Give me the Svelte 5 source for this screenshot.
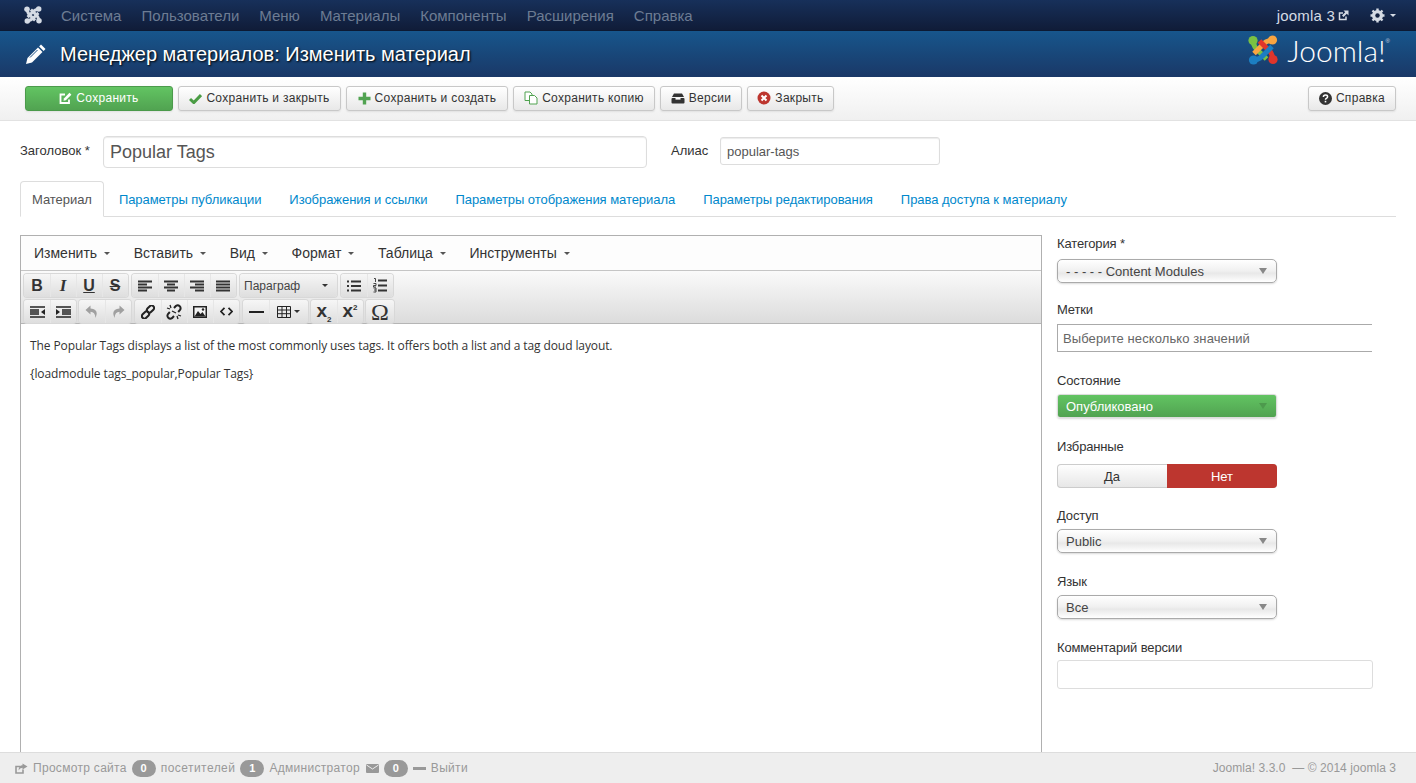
<script>
  const navItems = ['Система', 'Пользователи', 'Меню', 'Материалы', 'Компоненты', 'Расширения', 'Справка'];
  const tabs = ['Материал', 'Параметры публикации', 'Изображения и ссылки', 'Параметры отображения материала', 'Параметры редактирования', 'Права доступа к материалу'];
  const editorMenu = ['Изменить', 'Вставить', 'Вид', 'Формат', 'Таблица', 'Инструменты'];

  // text alignment icons, [x, width] of each of the bars
  const aligns = [
    [[0, 14], [0, 9], [0, 14], [0, 9]],
    [[0, 14], [3, 8], [0, 14], [3, 8]],
    [[0, 14], [5, 9], [0, 14], [5, 9]],
    [[0, 14], [0, 14], [0, 14], [0, 14]]
  ];

  const logoColors = ['#7ac143', '#f9a541', '#e0352b', '#1c7ec2'];
  const navColors = ['#d5dbe4', '#d5dbe4', '#d5dbe4', '#d5dbe4'];
</script>

{#snippet bars(rows)}
  <svg width="14" height="12" viewBox="0 0 14 12">
    {#each rows as r, i}
      <rect x={r[0]} y={i * 3 + 0.5} width={r[1]} height="2" fill="#333" />
    {/each}
  </svg>
{/snippet}

<!-- four hooked arms turning around the middle -->
{#snippet mark(size, colors)}
  <svg width={size} height={size} viewBox="0 0 30 30">
    {#each colors as color, i}
      <g transform="rotate({i * 90} 15 15)">
        <circle cx="5" cy="5.5" r="4.6" fill={color} />
        <path d="M5.5 5.5 C5 12 9 14.5 13 18.5 L18.5 24" fill="none" stroke={color} stroke-width="5" />
      </g>
    {/each}
  </svg>
{/snippet}

<div class="page">
  <nav class="topbar">
    <span class="brand">{@render mark(18, navColors)}</span>
    <ul class="nav">
      {#each navItems as item}
        <li>{item}</li>
      {/each}
    </ul>
    <div class="nav-right">
      <span class="site">joomla 3</span>
      <svg width="11" height="11" viewBox="0 0 11 11" class="ext">
        <path d="M8 6.5 V9.5 H1.5 V3 H5" fill="none" stroke="#d5dbe4" stroke-width="1.5" />
        <path d="M5.5 0.5 H10.5 V5.5 L8.8 3.8 L5.5 7 L4 5.5 L7.2 2.2 Z" fill="#d5dbe4" />
      </svg>
      <svg width="15" height="15" viewBox="0 0 15 15" class="gear">
        <circle cx="7.5" cy="7.5" r="4" fill="none" stroke="#d5dbe4" stroke-width="3" />
        <path d="M7.5 0.5 V14.5 M0.5 7.5 H14.5 M2.5 2.5 L12.5 12.5 M12.5 2.5 L2.5 12.5" stroke="#d5dbe4" stroke-width="2.4" />
        <circle cx="7.5" cy="7.5" r="2.2" fill="#13213f" />
      </svg>
      <span class="nav-caret"></span>
    </div>
  </nav>

  <header class="header">
    <svg width="22" height="22" viewBox="0 0 22 22">
      <path d="M16 1.5 L20.5 6 L18.6 7.9 L14.1 3.4 Z" fill="#fff" />
      <path d="M13 4.5 L17.5 9 L7 19.5 L1 21 L2.5 15 Z" fill="#fff" />
      <path d="M5 14.5 L12.5 7" stroke="#1a4f85" stroke-width="1" />
    </svg>
    <h1>Менеджер материалов: Изменить материал</h1>
    <div class="logo">
      {@render mark(30, logoColors)}
      <span class="wordmark">Joomla!</span>
      <sup class="reg">®</sup>
    </div>
  </header>

  <div class="toolbar">
    <button class="btn save">
      <svg width="13" height="13" viewBox="0 0 13 13">
        <path d="M10 7.5 V11 H1.5 V2.5 H6" fill="none" stroke="#fff" stroke-width="1.8" />
        <path d="M10.5 0.8 L12.4 2.7 L6.8 8.3 L4.5 8.7 L4.9 6.4 Z" fill="#fff" />
      </svg>
      Сохранить
    </button>
    <button class="btn w163">
      <svg width="13" height="11" viewBox="0 0 13 11"><path d="M1 6 L4.8 9.6 L12 2" fill="none" stroke="#4a9c44" stroke-width="3" /></svg>
      Сохранить и закрыть
    </button>
    <button class="btn w162">
      <svg width="13" height="13" viewBox="0 0 13 13"><path d="M6.5 0.5 V12.5 M0.5 6.5 H12.5" fill="none" stroke="#51a351" stroke-width="3.4" /></svg>
      Сохранить и создать
    </button>
    <button class="btn w142">
      <svg width="14" height="14" viewBox="0 0 14 14">
        <path d="M1 1 H6 L8 3 V9.5 H1 Z" fill="#fff" stroke="#51a351" />
        <path d="M5.5 4.5 H10.5 L13 7 V13 H5.5 Z" fill="#fff" stroke="#51a351" />
      </svg>
      Сохранить копию
    </button>
    <button class="btn w82">
      <svg width="14" height="11" viewBox="0 0 14 11">
        <path d="M3 0.5 H11 L13 4 H1 Z" fill="#333" />
        <rect x="0.5" y="5" width="13" height="5.5" rx="1" fill="#333" />
        <rect x="4.5" y="5" width="5" height="1.6" fill="#fff" />
      </svg>
      Версии
    </button>
    <button class="btn w87">
      <svg width="14" height="14" viewBox="0 0 14 14">
        <circle cx="7" cy="7" r="6.5" fill="#bd362f" />
        <path d="M4.5 4.5 L9.5 9.5 M9.5 4.5 L4.5 9.5" stroke="#fff" stroke-width="2" />
      </svg>
      Закрыть
    </button>
    <button class="btn help">
      <svg width="13" height="13" viewBox="0 0 13 13">
        <circle cx="6.5" cy="6.5" r="6.5" fill="#333" />
        <path d="M4.4 5 Q4.4 3 6.5 3 Q8.6 3 8.6 4.7 Q8.6 5.7 7.4 6.3 Q6.5 6.8 6.5 7.7" fill="none" stroke="#fff" stroke-width="1.5" />
        <rect x="5.7" y="8.8" width="1.6" height="1.6" fill="#fff" />
      </svg>
      Справка
    </button>
  </div>

  <main class="main">
    <div class="title-row">
      <label class="title-label" for="title">Заголовок *</label>
      <input id="title" class="title-input" value="Popular Tags" />
      <label class="alias-label" for="alias">Алиас</label>
      <input id="alias" class="alias-input" value="popular-tags" />
    </div>

    <ul class="tabs">
      {#each tabs as tab, i}
        <li class:active={i === 0}>{tab}</li>
      {/each}
    </ul>

    <div class="columns">
      <section class="editor">
        <div class="menubar">
          {#each editorMenu as m}
            <span class="menu-item">{m}<span class="menu-caret"></span></span>
          {/each}
        </div>
        <div class="mce-toolbar">
          <div class="mce-row first">
            <div class="group">
              <span class="tb"><b class="glyph">B</b></span>
              <span class="tb"><b class="glyph it">I</b></span>
              <span class="tb"><b class="glyph un">U</b></span>
              <span class="tb"><b class="glyph st">S</b></span>
            </div>
            <div class="group">
              {#each aligns as a}
                <span class="tb">{@render bars(a)}</span>
              {/each}
            </div>
            <div class="group">
              <span class="tb format">Параграф<span class="menu-caret tiny"></span></span>
            </div>
            <div class="group">
              <span class="tb">
                <svg width="14" height="12" viewBox="0 0 14 12">
                  <path d="M0 1.5 H2 M0 6 H2 M0 10.5 H2 M4 1.5 H14 M4 6 H14 M4 10.5 H14" stroke="#333" stroke-width="2" />
                </svg>
              </span>
              <span class="tb">
                <svg width="14" height="15" viewBox="0 0 14 15">
                  <path d="M5 2.5 H14 M5 7.5 H14 M5 12.5 H14" stroke="#333" stroke-width="2" />
                  <path d="M1 0.5 H2.5 V4 M0.5 5.5 H3 V7.5 H0.5 V9 H3 M0.5 10 H3 V14 H0.5 M1 12 H3" fill="none" stroke="#333" stroke-width="0.9" />
                </svg>
              </span>
            </div>
          </div>
          <div class="mce-row">
            <div class="group">
              <span class="tb">
                <svg width="15" height="12" viewBox="0 0 15 12">
                  <path d="M0 1 H15 M0 11 H15 M0 4 H9 M0 6 H9 M0 8 H9" stroke="#222" stroke-width="1.6" />
                  <path d="M15 3 V9 L11 6 Z" fill="#222" />
                </svg>
              </span>
              <span class="tb">
                <svg width="15" height="12" viewBox="0 0 15 12">
                  <path d="M0 1 H15 M0 11 H15 M6 4 H15 M6 6 H15 M6 8 H15" stroke="#222" stroke-width="1.6" />
                  <path d="M0 3 V9 L4 6 Z" fill="#222" />
                </svg>
              </span>
            </div>
            <div class="group">
              <span class="tb">
                <svg width="14" height="14" viewBox="0 0 14 14">
                  <path d="M5.5 0.5 L0.5 5 L5.5 9.5 V6.8 Q10 6.8 10.5 13 Q14.5 4 5.5 3.4 Z" fill="#a0a0a0" />
                </svg>
              </span>
              <span class="tb">
                <svg width="14" height="14" viewBox="0 0 14 14">
                  <path d="M8.5 0.5 L13.5 5 L8.5 9.5 V6.8 Q4 6.8 3.5 13 Q-0.5 4 8.5 3.4 Z" fill="#a0a0a0" />
                </svg>
              </span>
            </div>
            <div class="group wider">
              <span class="tb">
                <svg width="14" height="14" viewBox="0 0 14 14">
                  <g fill="none" stroke="#222" stroke-width="2">
                    <rect x="7" y="0" width="5" height="8" rx="2.5" transform="rotate(45 9.5 4)" />
                    <rect x="2" y="6" width="5" height="8" rx="2.5" transform="rotate(45 4.5 10)" />
                  </g>
                </svg>
              </span>
              <span class="tb">
                <svg width="16" height="16" viewBox="0 0 16 16">
                  <g fill="none" stroke="#222" stroke-width="2">
                    <path d="M8 4 L10 1.8 Q12 0.5 13.7 2.2 Q15.3 4 14 6 L12.2 8" />
                    <path d="M8 12 L6 14.2 Q4 15.5 2.3 13.8 Q0.7 12 2 10 L3.8 8" />
                  </g>
                  <path d="M1 4 L4 5 M4 1 L5 4 M12 15 L11 12 M15 12 L12 11 M6 7 L10 9" stroke="#222" stroke-width="1.3" />
                </svg>
              </span>
              <span class="tb">
                <svg width="14" height="12" viewBox="0 0 14 12">
                  <rect width="14" height="12" fill="#222" />
                  <rect x="1.5" y="1.5" width="11" height="9" fill="#f4f4f4" />
                  <path d="M1.5 10.5 L5 5 L7.5 8 L9.5 6 L12.5 10.5 Z" fill="#222" />
                  <circle cx="10" cy="3.5" r="1.2" fill="#222" />
                </svg>
              </span>
              <span class="tb">
                <svg width="13" height="9" viewBox="0 0 13 9">
                  <path d="M4.5 0.8 L1 4.5 L4.5 8.2 M8.5 0.8 L12 4.5 L8.5 8.2" fill="none" stroke="#222" stroke-width="1.7" />
                </svg>
              </span>
            </div>
            <div class="group wider">
              <span class="tb"><span class="hr"></span></span>
              <span class="tb table">
                <svg width="14" height="12" viewBox="0 0 14 12">
                  <path d="M0.5 0.5 H13.5 V11.5 H0.5 Z M0.5 4 H13.5 M0.5 7.7 H13.5 M5 0.5 V11.5 M9.5 0.5 V11.5" fill="none" stroke="#222" />
                </svg>
                <span class="menu-caret tiny near"></span>
              </span>
            </div>
            <div class="group">
              <span class="tb"><b class="script">x<sub>2</sub></b></span>
              <span class="tb"><b class="script">x<sup>2</sup></b></span>
            </div>
            <div class="group">
              <span class="tb omega-btn"><b class="omega">Ω</b></span>
            </div>
          </div>
        </div>
        <div class="content">
          <p>The Popular Tags displays a list of the most commonly uses tags. It offers both a list and a tag doud layout.</p>
          <p>&#123;loadmodule tags_popular,Popular Tags&#125;</p>
        </div>
      </section>

      <aside class="side">
        <div class="field category">
          <span class="lbl">Категория *</span>
          <div class="chosen"><span>- - - - - Content Modules</span><i></i></div>
        </div>
        <div class="field tags">
          <span class="lbl">Метки</span>
          <div class="tag-input">Выберите несколько значений</div>
        </div>
        <div class="field">
          <span class="lbl">Состояние</span>
          <div class="chosen green"><span>Опубликовано</span><i></i></div>
        </div>
        <div class="field featured">
          <span class="lbl">Избранные</span>
          <div class="toggle">
            <span>Да</span>
            <span class="no">Нет</span>
          </div>
        </div>
        <div class="field">
          <span class="lbl">Доступ</span>
          <div class="chosen"><span>Public</span><i></i></div>
        </div>
        <div class="field">
          <span class="lbl">Язык</span>
          <div class="chosen"><span>Все</span><i></i></div>
        </div>
        <div class="field note">
          <span class="lbl">Комментарий версии</span>
          <div class="comment"></div>
        </div>
      </aside>
    </div>
  </main>

  <footer class="footer">
    <svg width="13" height="11" viewBox="0 0 13 11">
      <path d="M8 6.5 V10 H1 V3.5 H5" fill="none" stroke="#999" stroke-width="1.6" />
      <path d="M7.5 0.5 L12.5 3.5 L7.5 6.5 V4.8 Q4.8 4.8 3.5 7.5 Q3.8 2.2 7.5 2.2 Z" fill="#999" />
    </svg>
    <span>Просмотр сайта</span>
    <span class="badge">0</span>
    <span class="visitors">посетителей</span>
    <span class="badge">1</span>
    <span>Администратор</span>
    <svg class="mail" width="13" height="9" viewBox="0 0 13 9">
      <rect width="13" height="9" rx="1" fill="#999" />
      <path d="M0.5 1 L6.5 5 L12.5 1" fill="none" stroke="#eee" />
    </svg>
    <span class="badge">0</span>
    <span class="minus"></span>
    <span>Выйти</span>
    <span class="copy">Joomla! 3.3.0 &nbsp;— © 2014 joomla 3</span>
  </footer>
</div>

<style>
  :global(body) {
    margin: 0;
    overflow: hidden;
    background: #fff;
  }

  .page {
    display: flex;
    flex-direction: column;
    height: 783px;
    font-family: "Liberation Sans", Arial, sans-serif;
    font-size: 13px;
    color: #333;
  }

  .topbar {
    display: flex;
    align-items: center;
    height: 30px;
    flex: none;
    padding: 0 20px 0 24px;
    background: linear-gradient(#17305a, #101c38);
    border-bottom: 1px solid #0c1a33;
  }

  .brand {
    display: flex;
    margin-right: 19px;
  }

  .nav {
    display: flex;
    gap: 20px;
    list-style: none;
    margin: 0;
    padding: 0;
    font-size: 15px;
    color: #6d7c93;
  }

  .nav-right {
    display: flex;
    align-items: center;
    margin-left: auto;
    color: #d5dbe4;
    font-size: 15px;
  }

  .site {
    letter-spacing: 0.2px;
  }

  .ext {
    margin-left: 3px;
  }

  .gear {
    margin-left: 21px;
  }

  .nav-caret {
    margin-left: 5px;
    border: 3.5px solid transparent;
    border-top: 3.5px solid #d5dbe4;
    border-bottom: 0;
  }

  .header {
    display: flex;
    align-items: center;
    gap: 13px;
    height: 46px;
    flex: none;
    padding: 0 25px;
    background: linear-gradient(#17568c, #1a3867);
  }

  .header h1 {
    margin: 0;
    font-size: 20px;
    font-weight: normal;
    color: #fff;
    text-shadow: 1px 1px 2px #000;
  }

  .logo {
    display: flex;
    align-items: center;
    gap: 9px;
    margin-left: auto;
    margin-right: 1px;
    position: relative;
    top: -4px;
  }

  .wordmark {
    font-family: Lato, sans-serif;
    font-weight: 300;
    font-size: 30px;
    color: #fff;
  }

  .reg {
    font-size: 6px;
    color: #cfd8e3;
    align-self: flex-start;
    margin: 6px 0 0 -9px;
  }

  .toolbar {
    display: flex;
    align-items: center;
    gap: 5px;
    height: 43px;
    flex: none;
    padding: 0 20px 0 25px;
    background: linear-gradient(#fff, #f0f0f0);
    border-bottom: 1px solid #e2e2e2;
  }

  .btn {
    display: flex;
    align-items: center;
    justify-content: center;
    gap: 4px;
    height: 25px;
    padding: 0 0 1px;
    box-sizing: border-box;
    font: 12px "Liberation Sans", Arial, sans-serif;
    letter-spacing: 0.3px;
    color: #333;
    background: linear-gradient(#fff, #e8e8e8);
    border: 1px solid #c8c8c8;
    border-radius: 3px;
    box-shadow: 0 1px 2px rgba(0, 0, 0, 0.08);
  }

  .save {
    width: 148px;
    color: #fff;
    background: linear-gradient(#62c462, #51a351);
    border-color: #4b9a4b;
  }

  .w163 { width: 163px; }
  .w162 { width: 162px; }
  .w142 { width: 142px; }
  .w82 { width: 82px; }
  .w87 { width: 87px; }

  .help {
    width: 88px;
    margin-left: auto;
  }

  .main {
    flex: 1;
    min-height: 0;
    overflow: hidden;
    padding: 15px 20px 0;
  }

  .title-row {
    display: flex;
    align-items: center;
    height: 32px;
  }

  .title-label {
    width: 83px;
    font-size: 13px;
    position: relative;
    top: -2px;
  }

  .title-input {
    width: 544px;
    height: 32px;
    box-sizing: border-box;
    padding: 0 6px;
    border: 1px solid #ddd;
    border-radius: 4px;
    box-shadow: inset 0 1px 1px rgba(0, 0, 0, 0.08);
    font: 18px "Liberation Sans", Arial, sans-serif;
    color: #555;
  }

  .alias-label {
    width: 49px;
    margin-left: 24px;
    font-size: 13px;
    position: relative;
    top: -2px;
  }

  .alias-input {
    width: 220px;
    height: 28px;
    box-sizing: border-box;
    margin-bottom: 2px;
    padding: 0 6px;
    border: 1px solid #ddd;
    border-radius: 3px;
    box-shadow: inset 0 1px 1px rgba(0, 0, 0, 0.08);
    font: 13px "Liberation Sans", Arial, sans-serif;
    color: #555;
  }

  .tabs {
    display: flex;
    box-sizing: border-box;
    list-style: none;
    margin: 13px 0 18px;
    padding: 0;
    height: 36px;
    border-bottom: 1px solid #ddd;
    font-size: 13px;
    letter-spacing: -0.05px;
    color: #0088cc;
  }

  .tabs li {
    padding: 0 14px;
    line-height: 37px;
  }

  .tabs li.active {
    box-sizing: border-box;
    height: 36px;
    margin-right: 1px;
    padding: 0 11px;
    line-height: 35px;
    color: #555;
    background: #fff;
    border: 1px solid #ddd;
    border-bottom-color: #fff;
    border-radius: 4px 4px 0 0;
  }

  .columns {
    display: flex;
    align-items: flex-start;
  }

  .editor {
    width: 1022px;
    height: 560px;
    flex: none;
    box-sizing: border-box;
    border: 1px solid #b0b0b0;
    border-bottom: 0;
  }

  .menubar {
    display: flex;
    align-items: center;
    gap: 23.6px;
    height: 34px;
    padding-left: 13px;
    background: #fdfdfd;
    border-bottom: 1px solid #c5c5c5;
    font-size: 14px;
  }

  .menu-item {
    display: flex;
    align-items: center;
  }

  .menu-caret {
    display: inline-block;
    margin-left: 7px;
    border: 3px solid transparent;
    border-top: 3px solid #555;
    border-bottom: 0;
  }

  .menu-caret.tiny {
    margin-left: auto;
    border-top-color: #333;
  }

  .menu-caret.near {
    margin-left: 3px;
  }

  .mce-toolbar {
    display: flex;
    flex-direction: column;
    gap: 3px;
    height: 53px;
    box-sizing: border-box;
    padding: 3px 3px 0;
    background: linear-gradient(#fafafa, #dcdcdc);
    border-bottom: 1px solid #b5b5b5;
  }

  .mce-row {
    display: flex;
    gap: 3px;
    height: 23px;
  }

  .mce-row.first {
    gap: 4px;
  }

  .group {
    display: flex;
    height: 23px;
    border-radius: 3px;
    box-shadow: 0 0 0 1px #d8d8d8;
    background: linear-gradient(#f6f6f6, #dedede);
  }

  .group.wider {
    margin-left: 1px;
  }

  .tb {
    display: flex;
    align-items: center;
    justify-content: center;
    width: 26px;
    height: 23px;
    flex: none;
  }

  .tb + .tb {
    box-shadow: inset 1px 0 0 #e6e6e6;
  }

  .tb.format {
    width: 97px;
    justify-content: flex-start;
    padding: 0 9px 0 4px;
    box-sizing: border-box;
    font-size: 12px;
    color: #444;
  }

  .tb.table {
    width: 39px;
  }

  .tb.omega-btn {
    width: 28px;
  }

  .glyph {
    font-size: 16px;
    font-family: "Liberation Sans", sans-serif;
    color: #333;
  }

  .it { font-style: italic; font-family: "Liberation Serif", serif; font-size: 17px; }
  .un { text-decoration: underline; }
  .st { text-decoration: line-through; }

  .hr {
    width: 15px;
    height: 2px;
    background: #222;
  }

  .script {
    font-size: 19px;
    line-height: 1;
    color: #333;
    position: relative;
    top: -1px;
  }

  .script sub, .script sup {
    font-size: 8px;
    line-height: 0;
  }

  .omega {
    font-family: "Liberation Serif", serif;
    font-size: 24px;
    font-weight: normal;
    line-height: 1;
    color: #333;
  }

  .content {
    padding: 3px 9px;
    font-family: "Open Sans", sans-serif;
    font-size: 12px;
    letter-spacing: -0.1px;
    line-height: 18px;
    color: #333;
  }

  .content p {
    margin: 10px 0;
  }

  .side {
    margin-left: 15px;
    width: 316px;
    flex: none;
  }

  .field {
    margin-bottom: 20px;
  }

  .lbl {
    display: block;
    height: 16px;
    line-height: 18px;
    margin-bottom: 6px;
    letter-spacing: -0.15px;
  }

  .category {
    margin-bottom: 18px;
  }

  .category .lbl {
    margin-bottom: 8px;
  }

  .tags .lbl {
    margin-bottom: 7px;
  }

  .featured {
    margin-bottom: 19px;
  }

  .featured .lbl {
    margin-bottom: 10px;
  }

  .note .lbl {
    margin-bottom: 5px;
  }

  .chosen {
    display: flex;
    align-items: center;
    justify-content: space-between;
    width: 220px;
    height: 24px;
    box-sizing: border-box;
    padding: 0 9px 0 8px;
    background: linear-gradient(#fff 0, #f0f0f0 50%, #e8e8e8 60%, #fff 100%);
    border: 1px solid #aaa;
    border-radius: 5px;
    box-shadow: 0 1px 2px rgba(0, 0, 0, 0.15);
    color: #444;
  }

  .chosen i {
    border: 4px solid transparent;
    border-top: 6px solid #888;
    border-bottom: 0;
  }

  .chosen.green {
    color: #fff;
    background: linear-gradient(#62c462, #51a351);
    border-color: #dcdcdc;
    border-radius: 3px;
  }

  .chosen.green i {
    border-top-color: #4d9a4d;
  }

  .tag-input {
    display: flex;
    align-items: center;
    width: 315px;
    height: 28px;
    box-sizing: border-box;
    padding-left: 5px;
    border: 1px solid #aaa;
    border-right: 0;
    color: #666;
    letter-spacing: 0.1px;
  }

  .toggle {
    display: flex;
    width: 220px;
    height: 24px;
    text-align: center;
    line-height: 25px;
    border-radius: 4px;
    overflow: hidden;
    box-shadow: inset 0 0 0 1px #ccc;
    background: linear-gradient(#fff, #e6e6e6);
  }

  .toggle span {
    flex: 1;
    color: #333;
  }

  .toggle .no {
    background: #bd362f;
    color: #fff;
  }

  .comment {
    width: 316px;
    height: 29px;
    box-sizing: border-box;
    border: 1px solid #ddd;
    border-radius: 3px;
  }

  .footer {
    display: flex;
    align-items: center;
    gap: 5px;
    height: 30px;
    flex: none;
    padding: 0 20px 0 15px;
    background: #eee;
    border-top: 1px solid #ddd;
    font-size: 12px;
    color: #999;
    letter-spacing: 0.3px;
  }

  .visitors {
    letter-spacing: 0.45px;
  }

  .mail {
    margin-left: 1px;
  }

  .badge {
    min-width: 24px;
    height: 17px;
    line-height: 17px;
    text-align: center;
    font-weight: bold;
    font-size: 11px;
    color: #fff;
    background: #999;
    border-radius: 9px;
  }

  .minus {
    width: 13px;
    height: 3px;
    background: #999;
  }

  .copy {
    margin-left: auto;
    letter-spacing: 0.05px;
  }
</style>
